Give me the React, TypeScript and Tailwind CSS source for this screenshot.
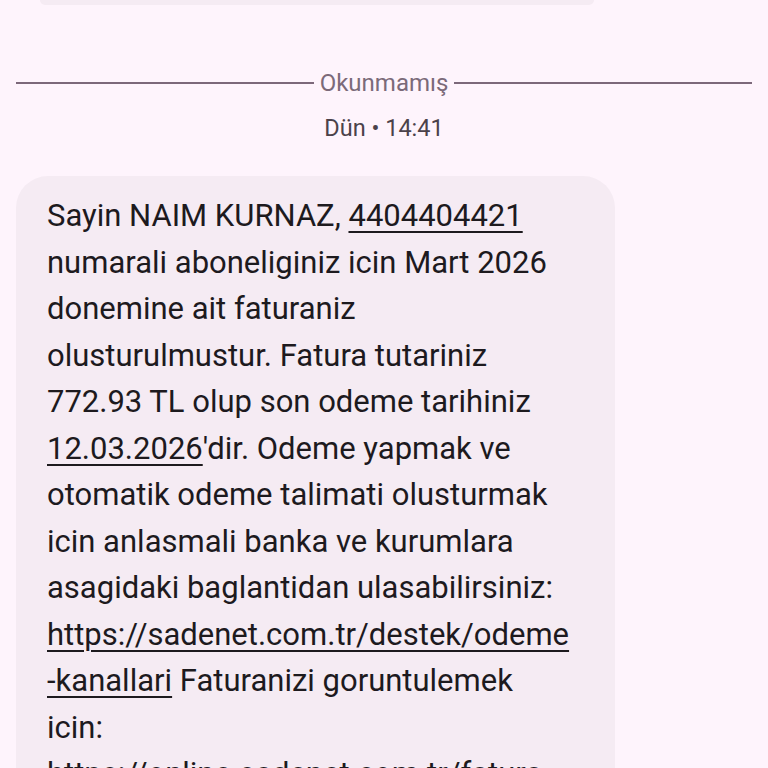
import React from 'react';

const lines: React.ReactNode[] = [
  <>Sayin NAIM KURNAZ, <Link>4404404421</Link></>,
  <>numarali aboneliginiz icin Mart 2026</>,
  <>donemine ait faturaniz</>,
  <>olusturulmustur. Fatura tutariniz</>,
  <>772.93 TL olup son odeme tarihiniz</>,
  <><Link>12.03.2026</Link>'dir. Odeme yapmak ve</>,
  <>otomatik odeme talimati olusturmak</>,
  <>icin anlasmali banka ve kurumlara</>,
  <>asagidaki baglantidan ulasabilirsiniz:</>,
  <Link>https://sadenet.com.tr/destek/odeme</Link>,
  <><Link>-kanallari</Link> Faturanizi goruntulemek</>,
  <>icin:</>,
  <Link>https://online.sadenet.com.tr/fatura</Link>,
];

function Link({ children }: { children: React.ReactNode }) {
  return (
    <span className="underline decoration-2 underline-offset-[5px]">{children}</span>
  );
}

export default function App() {
  return (
    <div
      className="w-[768px] h-[768px] overflow-hidden bg-[#fef4fc] text-[#1d1a1e]"
      style={{ fontFamily: 'Roboto, "Noto Sans", sans-serif' }}
    >
      {/* previous bubble, mostly scrolled away */}
      <div className="ml-[40px] w-[554px] h-[5px] rounded-b-[6px] bg-[#f5ebf3]" />

      {/* unread divider */}
      <div className="mt-[64px] px-4 flex items-center gap-[6px]">
        <div className="flex-1 h-[2px] bg-[#7c687a]" />
        <span className="text-[24px] leading-[28px] text-[#7b6a79]">Okunmamış</span>
        <div className="flex-1 h-[2px] bg-[#7c687a]" />
      </div>

      <div className="mt-[17px] text-center text-[23.5px] leading-[28px] text-[#4b424a]">
        Dün • 14:41
      </div>

      {/* message bubble */}
      <div className="mt-[34px] ml-4 w-[599px] rounded-[32px] bg-[#f5ebf3] pl-[31px] pr-[20px] pt-[17px] pb-6">
        <div className="flex flex-col text-[31px] leading-[46.5px] whitespace-nowrap">
          {lines.map((l, i) => (
            <div key={i}>{l}</div>
          ))}
        </div>
      </div>
    </div>
  );
}
